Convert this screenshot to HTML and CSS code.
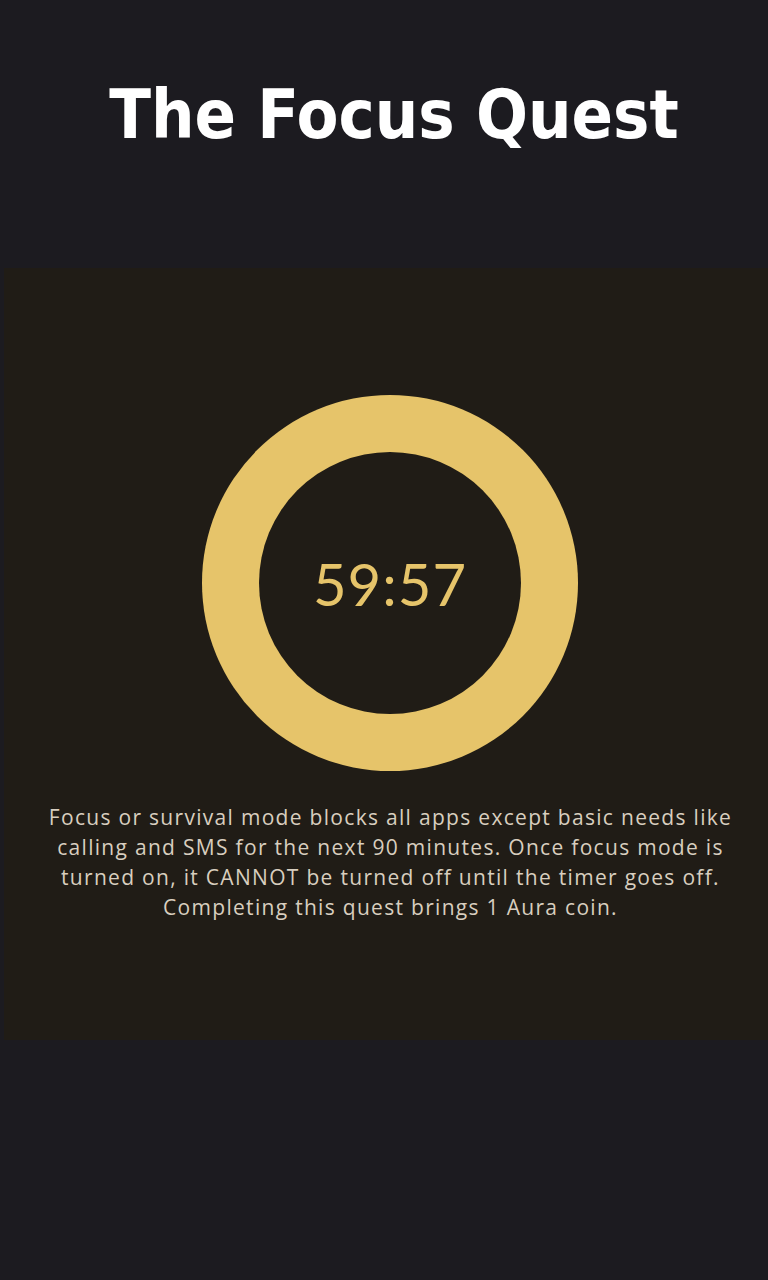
FILE: index.html
```html
<!DOCTYPE html>
<html lang="en">
<head>
<meta charset="utf-8">
<title>The Focus Quest</title>
<link rel="stylesheet" href="styles.css">
</head>
<body>
<div class="page">
  <h1 class="title">The Focus Quest</h1>
  <section class="panel">
    <div class="ring">
      <div class="ring-inner">
        <span class="timer">59:57</span>
      </div>
    </div>
    <p class="desc">Focus or survival mode blocks all apps except basic needs like calling and SMS for the next 90 minutes. Once focus mode is turned on, it CANNOT be turned off until the timer goes off. Completing this quest brings 1 Aura coin.</p>
  </section>
</div>
</body>
</html>
```
FILE: styles.css
```css
html, body {
  margin: 0;
  padding: 0;
  background: #1c1b20;
  overflow: hidden;
}
.page {
  width: 768px;
  height: 1280px;
  overflow: hidden;
}
.title {
  margin: 0;
  padding-top: 70px;
  height: 200px;
  box-sizing: border-box;
  text-align: center;
  color: #ffffff;
  font-family: "DejaVu Sans Condensed", "DejaVu Sans", sans-serif;
  font-stretch: condensed;
  font-weight: bold;
  font-size: 68px;
  letter-spacing: 0;
  line-height: 90px;
  padding-left: 20px;
}
.panel {
  margin-top: 68px;
  margin-left: 4px;
  width: 772px;
  height: 772px;
  background: #201c16;
  display: flex;
  flex-direction: column;
  align-items: center;
  padding-top: 127px;
  box-sizing: border-box;
}
.ring {
  width: 376px;
  height: 376px;
  border-radius: 50%;
  background: #e6c46a;
  display: flex;
  align-items: center;
  justify-content: center;
}
.ring-inner {
  width: 262px;
  height: 262px;
  border-radius: 50%;
  background: #201c16;
  display: flex;
  align-items: center;
  justify-content: center;
}
.timer {
  color: #e6c46a;
  font-family: "Lato", sans-serif;
  font-size: 58px;
  font-weight: 400;
  letter-spacing: 1px;
}
.desc {
  margin: 31px 0 0;
  width: 708px;
  text-align: center;
  color: #d8cebf;
  font-family: "Open Sans", sans-serif;
  font-size: 21px;
  line-height: 30px;
  letter-spacing: 1.3px;
  padding-left: 1px;
}
```
